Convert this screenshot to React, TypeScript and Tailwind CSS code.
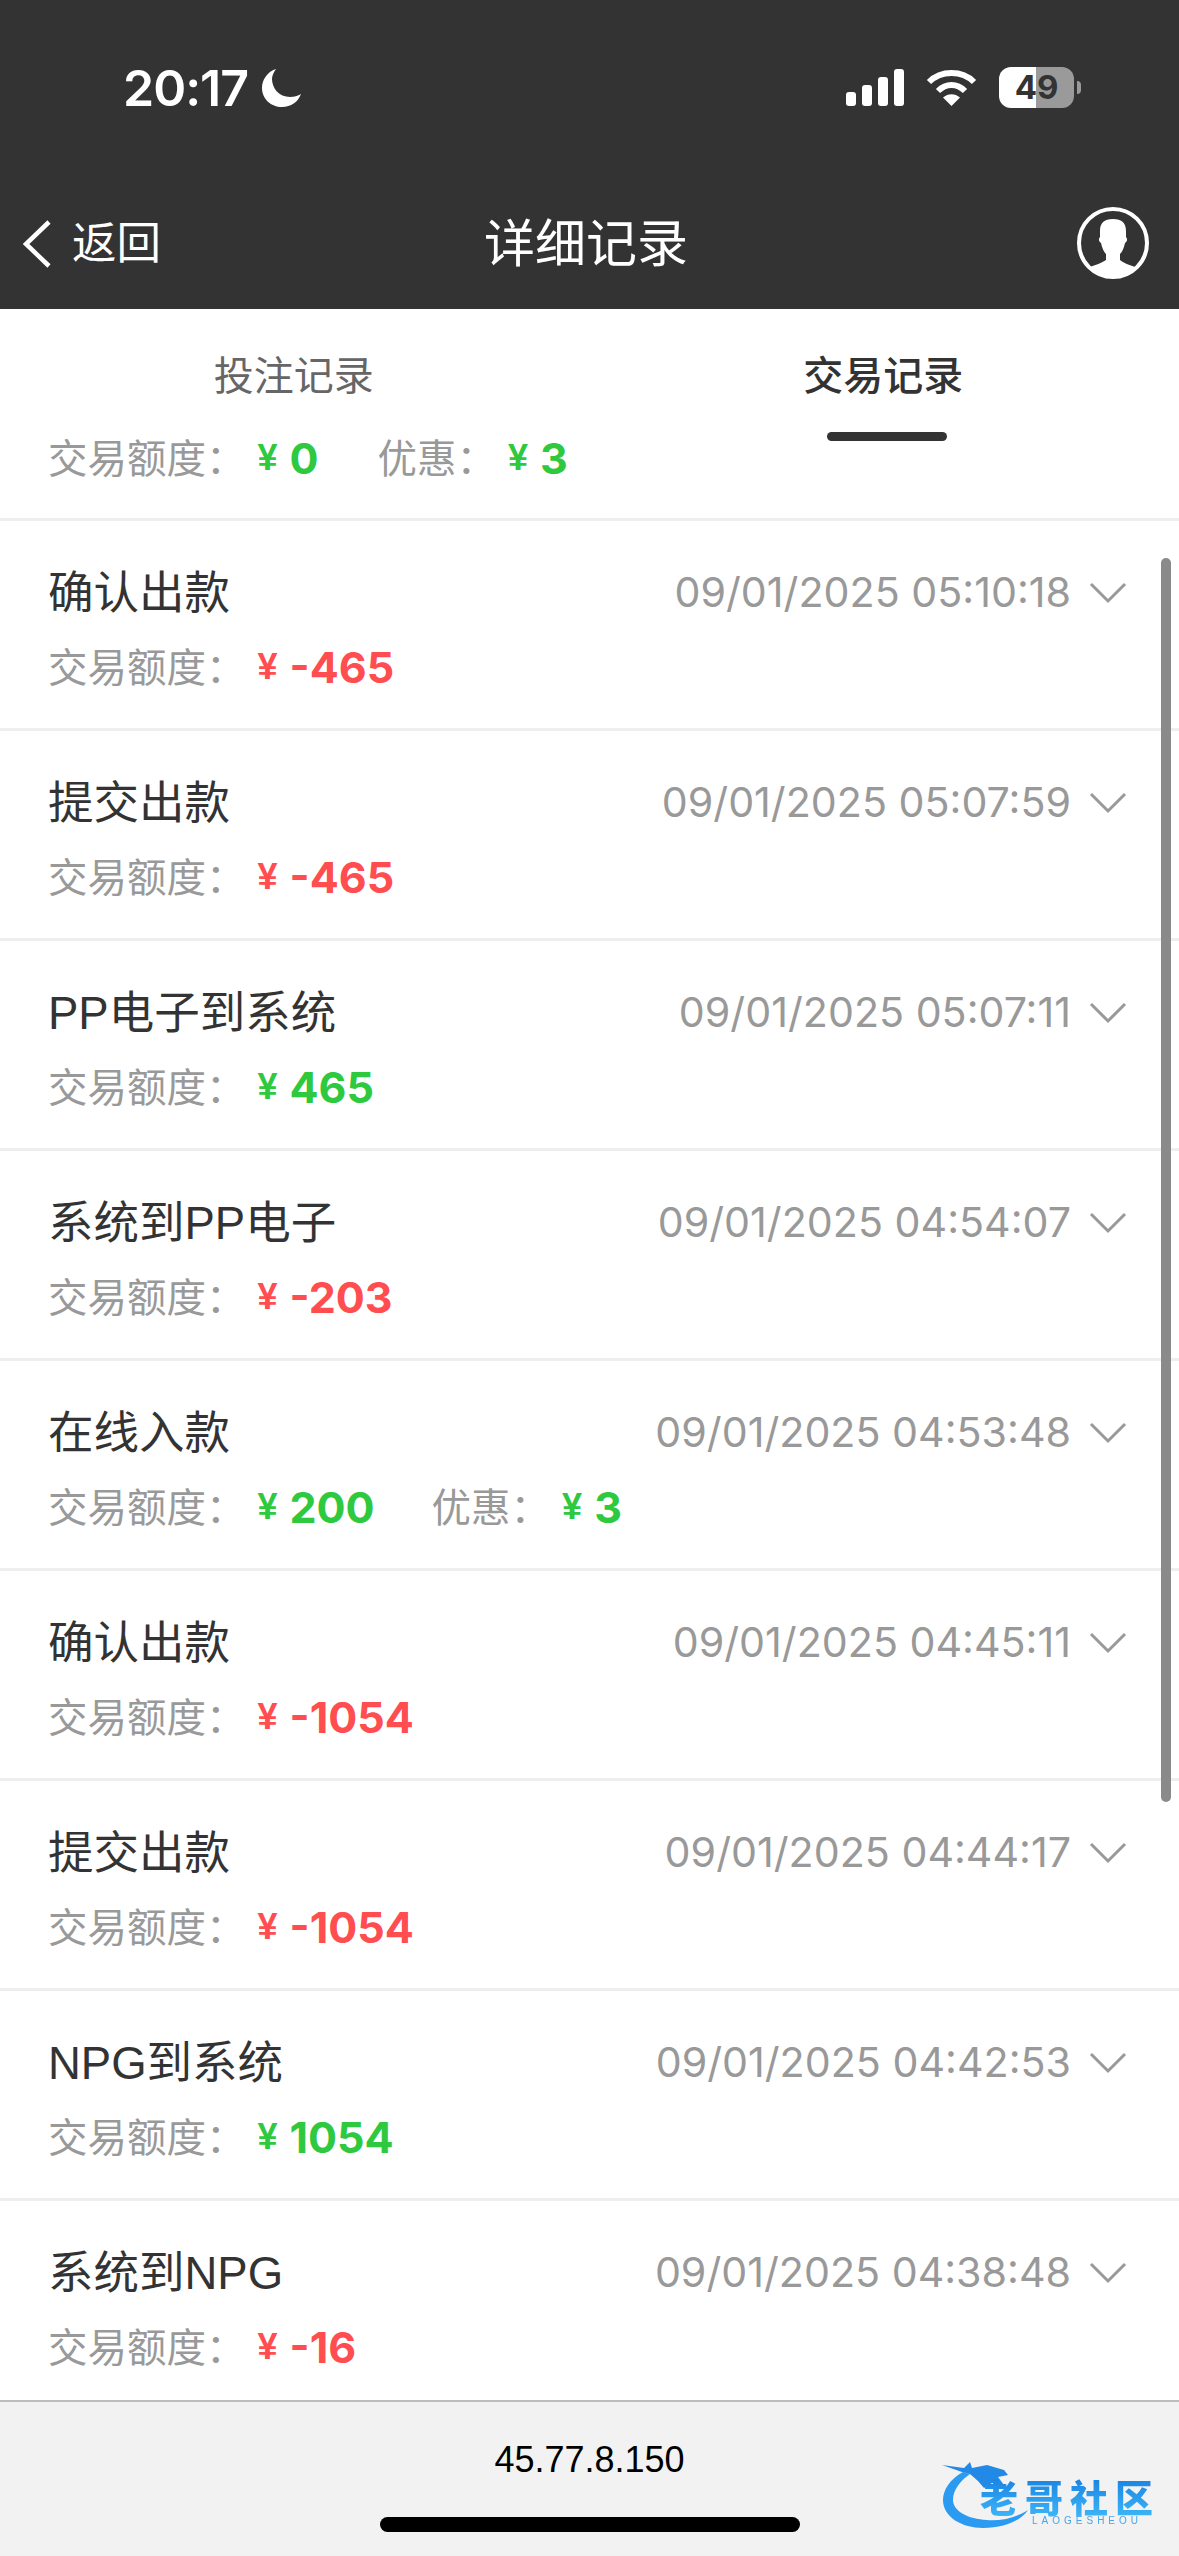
const records = [
  { title: "确认出款", time: "09/01/2025 05:10:18", amount: "-465", up: false },
  { title: "提交出款", time: "09/01/2025 05:07:59", amount: "-465", up: false },
  { title: "PP电子到系统", time: "09/01/2025 05:07:11", amount: "465", up: true },
  { title: "系统到PP电子", time: "09/01/2025 04:54:07", amount: "-203", up: false },
  { title: "在线入款", time: "09/01/2025 04:53:48", amount: "200", up: true, bonus: "3" },
  { title: "确认出款", time: "09/01/2025 04:45:11", amount: "-1054", up: false },
  { title: "提交出款", time: "09/01/2025 04:44:17", amount: "-1054", up: false },
  { title: "NPG到系统", time: "09/01/2025 04:42:53", amount: "1054", up: true },
  { title: "系统到NPG", time: "09/01/2025 04:38:48", amount: "-16", up: false },
];

const Money = ({ value, up }: { value: string; up: boolean }) => (
  <span className={`flex items-center font-bold ${up ? "text-[#2fc93f]" : "text-[#ff4d50]"}`}>
    <span className="mr-[12px] ml-[1px] text-[36px]">¥</span>
    <span className="font-['Inter'] text-[43px]">{value}</span>
  </span>
);

const Label = ({ children, className = "" }: { children: string; className?: string }) => (
  <span className={`mr-[11px] pt-[3px] text-[39.5px] text-[#999999] ${className}`}>{children}</span>
);

const StatusBar = () => (
  <div className="flex h-[174px] items-start justify-between pl-[123px] pr-[98px] pt-[62px] text-white">
    <div className="flex items-center gap-[14px]">
      <span className="font-['Inter'] text-[50px] leading-[52px] font-semibold tracking-[-1px]">20:17</span>
      <svg width="39" height="38" viewBox="0 0 39 38" fill="white">
        <path d="M14 0C5 3 0 11 0 19C0 30 9 38 20 38C29 38 36 33 39 25C36 27 32 28 28 28C17 28 10 19 10 10C10 6 12 3 14 0Z" />
      </svg>
    </div>
    <div className="flex items-center pt-[5px]">
      <svg width="58" height="37" viewBox="0 0 58 37" fill="white">
        <rect x="0" y="23" width="10" height="14" rx="3" />
        <rect x="16" y="16" width="10" height="21" rx="3" />
        <rect x="32" y="8" width="10" height="29" rx="3" />
        <rect x="48" y="0" width="10" height="37" rx="3" />
      </svg>
      <svg className="ml-[22px]" width="51" height="37" viewBox="0 0 51 37" fill="none">
        <path d="M3 13C15 1 36 1 48 13" stroke="white" strokeWidth="6" />
        <path d="M12 22C20 14 31 14 39 22" stroke="white" strokeWidth="6" />
        <path d="M25.5 37L17 28.5C22 24 29 24 34 28.5Z" fill="white" />
      </svg>
      <div className="relative ml-[22px] flex h-[41px] w-[75px] items-center justify-center overflow-hidden rounded-[12px] bg-[linear-gradient(90deg,#ffffff_49%,#9a9a9a_49%)]">
        <span className="font-['Inter'] text-[33px] leading-none font-bold text-[#333333]">49</span>
      </div>
      <div className="ml-[3px] h-[13px] w-[4px] rounded-r-full bg-[#9a9a9a]" />
    </div>
  </div>
);

const NavBar = () => (
  <div className="relative flex h-[135px] items-start justify-between pl-[22px] pr-[30px] text-white">
    <div className="flex h-[140px] items-center">
      <svg width="30" height="48" viewBox="0 0 30 48" fill="none">
        <path d="M27 2L4 24L27 46" stroke="white" strokeWidth="4.5" />
      </svg>
      <span className="ml-[20px] text-[44.5px]">返回</span>
    </div>
    <span className="absolute left-[484px] top-0 flex h-[140px] items-center text-[51px] leading-none">详细记录</span>
    <svg className="mt-[33px]" width="72" height="72" viewBox="0 0 72 72" fill="white">
      <circle cx="36" cy="36" r="34" fill="none" stroke="white" strokeWidth="4" />
      <path d="M36 12C27 12 23 16 23 24L23 30C21 32 22 35 24 36C25 41 27 45 29 47L29 53C25 56 18 58 13 60C20 68 28 71 36 71C44 71 52 68 58 60C53 58 46 56 43 53L43 47C45 45 47 41 48 36C50 35 51 32 49 30L49 24C49 16 45 12 36 12Z" />
    </svg>
  </div>
);

const Tabs = () => (
  <div className="h-[212px] shrink-0 border-b-[3px] border-[#eeeef0]">
    <div className="flex h-[125px] pt-[42px] text-[40px] leading-[50px]">
      <div className="w-1/2 pr-[2px] text-center text-[#666666]">投注记录</div>
      <div className="relative w-1/2 pr-[2px] text-center font-medium text-[#333333]">
        交易记录
        <div className="absolute left-[237px] top-[81px] h-[9px] w-[120px] rounded-full bg-[#333333]" />
      </div>
    </div>
    <div className="flex h-[48px] items-center pl-[48px]">
      <Label>交易额度：</Label>
      <Money value="0" up />
      <Label className="ml-[59px]">优惠：</Label>
      <Money value="3" up />
    </div>
  </div>
);

export default function App() {
  return (
    <div className="relative flex h-[2556px] w-[1179px] flex-col overflow-hidden bg-white font-['Liberation_Sans','Noto_Sans_CJK_SC',sans-serif]">
      <div className="h-[309px] shrink-0 bg-[#333333]">
        <StatusBar />
        <NavBar />
      </div>
      <Tabs />
      <div className="min-h-0 flex-1 overflow-hidden">
        {records.map((r) => (
          <div key={r.time} className="h-[210px] border-b-[3px] border-[#eeeef0] pl-[48px] pr-[52px] pt-[47px]">
            <div className="flex h-[50px] items-center justify-between">
              <span className="pt-[3px] text-[45.5px] text-[#333333]">{r.title}</span>
              <div className="flex items-center">
                <span className="font-['Inter'] text-[41.2px] text-[#999999]">{r.time}</span>
                <svg className="ml-[18px]" width="38" height="22" viewBox="0 0 38 22" fill="none">
                  <path d="M2 2L19 19L36 2" stroke="#999999" strokeWidth="3" />
                </svg>
              </div>
            </div>
            <div className="mt-[24px] flex h-[50px] items-center">
              <Label>交易额度：</Label>
              <Money value={r.amount} up={r.up} />
              {r.bonus && (
                <>
                  <Label className="ml-[57px]">优惠：</Label>
                  <Money value={r.bonus} up={r.up} />
                </>
              )}
            </div>
          </div>
        ))}
      </div>
      <div className="relative flex h-[156px] shrink-0 flex-col items-center border-t-2 border-[#bdbdbd] bg-[#f2f2f2]">
        <span className="mt-[38px] text-[36px] leading-[40px] text-black">45.77.8.150</span>
        <div className="mt-[37px] h-[15px] w-[420px] rounded-full bg-black" />
        {/* watermark logo */}
        <div className="absolute left-[942px] top-[53px] h-[75px] w-[220px] blur-[0.6px]">
          <svg className="absolute left-0 top-0" width="100" height="75" viewBox="0 0 100 75">
            <path fill="#2a9bf0" d="M21 17C8 24 1 35 1 45C1 62 20 73 41 73C60 73 78 67 86 55C74 63 58 66 45 65C26 64 11 56 11 45C11 35 18 26 28 19Z" />
            <path fill="#2289e6" d="M0 10L22 13L28 7L30 13L45 10L62 15L66 20L56 22L62 30L50 28L42 33L36 26L28 19L20 17Z" />
          </svg>
          <span className="absolute left-[38px] top-[24px] bg-gradient-to-b from-[#1a84e4] to-[#3fb8f8] bg-clip-text text-[38px] leading-[40px] font-black tracking-[7px] whitespace-nowrap text-transparent">老哥社区</span>
          <span className="absolute left-[90px] top-[60px] text-[10px] leading-[12px] tracking-[4px] text-[#4aa5ea]">LAOGESHEOU</span>
        </div>
      </div>
      {/* scrollbar */}
      <div className="absolute left-[1161px] top-[558px] h-[1244px] w-[10px] rounded-full bg-[#8a8a8a]" />
    </div>
  );
}
